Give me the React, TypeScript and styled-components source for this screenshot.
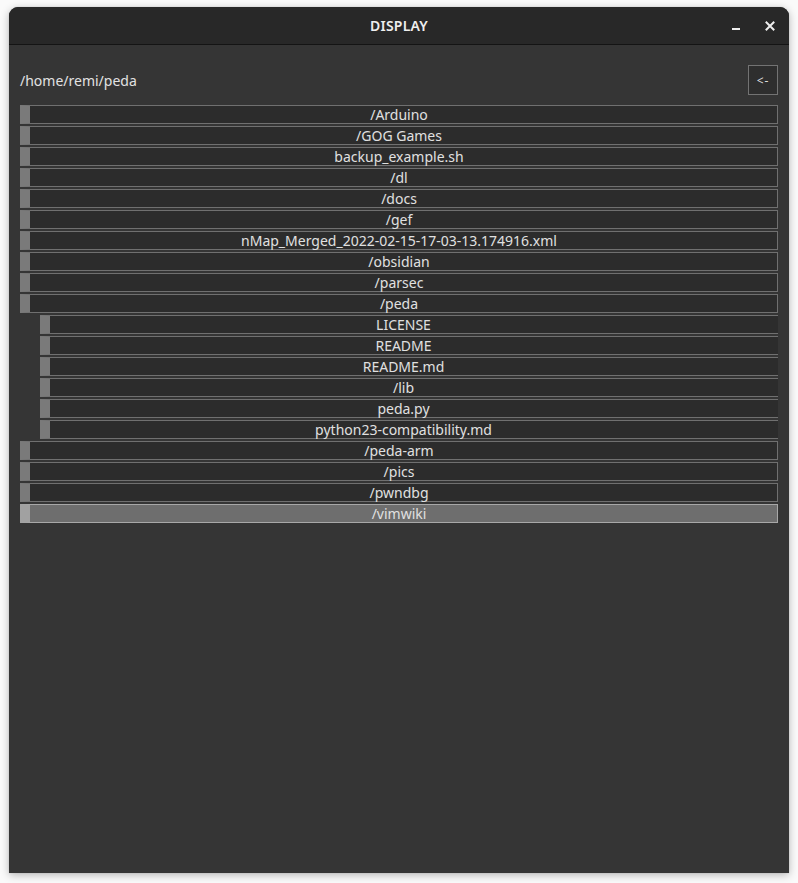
import React from "react";
import styled, { createGlobalStyle } from "styled-components";

const Global = createGlobalStyle`
  html, body { margin: 0; padding: 0; }
  body {
    background: #fafafa;
    font-family: "Noto Sans", "Open Sans", sans-serif;
    width: 798px;
    height: 883px;
    overflow: hidden;
  }
`;

const Screen = styled.div`
  padding: 7px 9px 10px 9px;
  box-sizing: border-box;
  width: 798px;
  height: 883px;
`;

const Window = styled.div`
  width: 780px;
  height: 866px;
  display: flex;
  flex-direction: column;
  background: #353535;
  border-radius: 9px 9px 0 0;
  overflow: hidden;
  box-shadow: 0 2px 9px rgba(0, 0, 0, 0.28), 0 0 1px rgba(0, 0, 0, 0.3);
`;

const TitleBar = styled.div`
  height: 38px;
  flex: none;
  box-sizing: border-box;
  background: #282828;
  border-bottom: 1px solid #141414;
  display: flex;
  align-items: center;
  justify-content: center;
  position: relative;
`;

const Title = styled.div`
  color: #eeeeee;
  font-weight: 600;
  font-size: 14px;
  letter-spacing: 0.2px;
`;

const Controls = styled.div`
  position: absolute;
  right: 7px;
  top: 0;
  height: 100%;
  display: flex;
  align-items: center;
  gap: 10px;
`;

const CtrlButton = styled.div`
  width: 24px;
  height: 24px;
  display: flex;
  align-items: center;
  justify-content: center;
`;

const Body = styled.div`
  flex: 1;
  padding: 20px 11px 0 11px;
  display: flex;
  flex-direction: column;
`;

const Header = styled.div`
  height: 30px;
  display: flex;
  align-items: center;
  justify-content: space-between;
  margin-bottom: 10px;
`;

const PathLabel = styled.div`
  color: #e2e2e2;
  font-size: 14px;
`;

const BackButton = styled.button`
  width: 30px;
  height: 30px;
  box-sizing: border-box;
  border: 1px solid #737373;
  background: #2e2e2e;
  color: #dcdcdc;
  font-family: "Noto Sans", sans-serif;
  font-size: 12px;
  padding: 0;
  display: flex;
  align-items: center;
  justify-content: center;
  letter-spacing: 1px;
`;

const List = styled.div`
  width: 758px;
  overflow: hidden;
  display: flex;
  flex-direction: column;
  gap: 2px;
`;

const Row = styled.div<{ $indent: boolean; $selected: boolean }>`
  flex: none;
  width: 758px;
  height: 19px;
  box-sizing: border-box;
  margin-left: ${(p) => (p.$indent ? "20px" : "0")};
  border: 1px solid ${(p) => (p.$selected ? "#a8a8a8" : "#707070")};
  border-left: 10px solid ${(p) => (p.$selected ? "#a1a1a1" : "#7a7a7a")};
  background: ${(p) => (p.$selected ? "#6e6e6e" : "#2c2c2c")};
  display: flex;
  align-items: center;
  justify-content: center;
  padding-right: ${(p) => (p.$indent ? "40px" : "9px")};
`;

const RowLabel = styled.span`
  color: #e0e0e0;
  font-size: 14px;
  line-height: 17px;
  white-space: nowrap;
`;

type Entry = { name: string; indent?: boolean; selected?: boolean };

const entries: Entry[] = [
  { name: "/Arduino" },
  { name: "/GOG Games" },
  { name: "backup_example.sh" },
  { name: "/dl" },
  { name: "/docs" },
  { name: "/gef" },
  { name: "nMap_Merged_2022-02-15-17-03-13.174916.xml" },
  { name: "/obsidian" },
  { name: "/parsec" },
  { name: "/peda" },
  { name: "LICENSE", indent: true },
  { name: "README", indent: true },
  { name: "README.md", indent: true },
  { name: "/lib", indent: true },
  { name: "peda.py", indent: true },
  { name: "python23-compatibility.md", indent: true },
  { name: "/peda-arm" },
  { name: "/pics" },
  { name: "/pwndbg" },
  { name: "/vimwiki", selected: true },
];

export default function App() {
  return (
    <>
      <Global />
      <Screen>
        <Window>
          <TitleBar>
            <Title>DISPLAY</Title>
            <Controls>
              <CtrlButton>
                <svg width="12" height="12" viewBox="0 0 12 12">
                  <rect x="2" y="8" width="8" height="2" fill="#eeeeee" />
                </svg>
              </CtrlButton>
              <CtrlButton>
                <svg width="12" height="12" viewBox="0 0 12 12">
                  <path
                    d="M2.5 2.5 L9.5 9.5 M9.5 2.5 L2.5 9.5"
                    stroke="#eeeeee"
                    strokeWidth="2"
                    strokeLinecap="square"
                  />
                </svg>
              </CtrlButton>
            </Controls>
          </TitleBar>
          <Body>
            <Header>
              <PathLabel>/home/remi/peda</PathLabel>
              <BackButton>&lt;-</BackButton>
            </Header>
            <List>
              {entries.map((e) => (
                <Row key={e.name} $indent={!!e.indent} $selected={!!e.selected}>
                  <RowLabel>{e.name}</RowLabel>
                </Row>
              ))}
            </List>
          </Body>
        </Window>
      </Screen>
    </>
  );
}
